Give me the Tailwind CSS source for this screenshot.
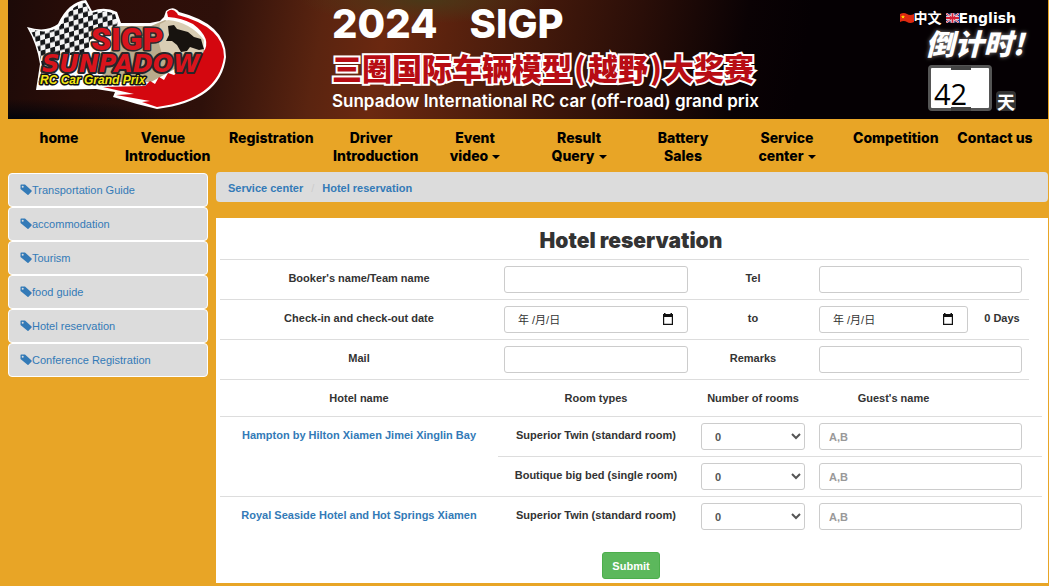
<!DOCTYPE html>
<html lang="en">
<head>
<meta charset="utf-8">
<meta name="viewport" content="width=device-width, initial-scale=1">
<title>Hotel reservation</title>
<script src="https://cdn.jsdelivr.net/npm/@tailwindcss/browser@4"></script>
</head>
<body class="min-h-screen bg-[#e8a526] pl-2 pr-px font-['Liberation_Sans','Noto_Sans_CJK_SC',sans-serif] text-[11px] leading-4 text-[#333]">
<svg class="hidden" aria-hidden="true">
  <symbol id="tag" viewBox="0 0 12 12"><path fill="currentColor" fill-rule="evenodd" d="M.5 1.3Q.5.5 1.3.5H5L11.6 6.4Q12 6.900 11.6 7.4L8.500 10.800Q8 11.200 7.500 10.800L.5 5.100ZM2.700 1.700A1 1 0 1 0 2.700 3.700A1 1 0 1 0 2.700 1.700Z"/></symbol>
  <symbol id="calendar" viewBox="0 0 12 13"><path fill="#111" fill-rule="evenodd" d="M2 0H3.500V1H8.500V0H10V1H11V12H1V1H2ZM2.200 4V10.800H9.800V4Z"/></symbol>
</svg>

<header class="flex h-[119px] items-start justify-between overflow-hidden bg-[#050003] bg-[radial-gradient(ellipse_at_40%_0%,#4a3818_0%,transparent_14%),radial-gradient(ellipse_at_0%_100%,#02040a_0%,transparent_12%),linear-gradient(100deg,#1c0a08_0%,#2c0d08_8%,#2e100a_20%,#5a2410_30%,#6b2810_36%,#4a1c0c_48%,#2a0e08_60%,#0a0204_70%,#050003_76%)] pr-6">
  <div class="flex">
    <svg class="ml-[17px] h-[112px] w-[204px] shrink-0" viewBox="25 0 204 112" role="img" aria-label="SIGP Sunpadow RC Car Grand Prix">
      <defs><pattern id="chk" width="10" height="10" patternUnits="userSpaceOnUse" patternTransform="rotate(-16) skewX(-14)"><rect width="10" height="10" fill="#f4f4f4"/><path d="M0 0h5v10h5V5H0Z" fill="#15171a"/></pattern></defs>
      <path d="M27 27Q46 33 58 24Q68 2 86 0L92 11Q105 6 117 12L121 23H150L160 21L164 17L166 11Q173 5 179 12Q226 24 226 57Q221 101 157 109L137 104L113 97L115 92L96 89L36 90L40 64Q37 44 27 27Z" fill="#fff"/>
      <path d="M30 29Q48 35 60 26Q70 5 85 3L91 13Q104 9 115 14L118 25L90 40L88 55H48L38 85L42 66Q39 46 30 29Z" fill="url(#chk)"/>
      <path d="M119 26H151L165 20L190 30L206 52L151 82H100Z" fill="#b9ab8c"/>
      <path d="M160 24L168 20Q190 22 204 40L203 54H162L158 40Z" fill="#d9cdb4"/>
      <path d="M168 26L174 25L177 29L188 32L194 37L201 39L203 46L204 49L199 50L190 47L187 51L181 52L177 45L172 41H166L169 35Z" fill="#17130f"/>
      <path d="M167 12Q172 7 177 13L178 15Q224 27 224 57Q218 99 157 107L142 102L150 101L116 95L134 94L103 87L145 86L150 81L155 84L159 77L164 80L168 73L174 75L203 53Q213 39 193 24Q182 18 168 17Z" fill="#d4070f"/>
      <g stroke-linejoin="round" paint-order="stroke fill">
        <text x="91" y="50" font-family="Roboto, sans-serif" font-weight="900" font-size="32" fill="#d9141c" stroke="#2a2a2c" stroke-width="3">SIGP</text>
        <text x="42" y="72" font-family="DejaVu Sans, sans-serif" font-weight="700" font-style="italic" font-size="24" fill="#d9141c" stroke="#26262a" stroke-width="4">SUNPADOW</text>
        <text x="40" y="84" font-family="Liberation Sans, sans-serif" font-weight="700" font-style="italic" font-size="12" fill="#f3e713" stroke="#111" stroke-width="3">RC Car Grand Prix</text>
      </g>
    </svg>
    <div class="ml-[103px] mt-1 text-white">
      <div class="flex gap-8 font-[Inter] text-[40px] font-extrabold leading-10"><span>2024</span><span>SIGP</span></div>
      <h1 class="mt-[3px] whitespace-nowrap font-['Noto_Sans_CJK_SC'] text-[30px] font-black leading-10 text-[#b80d14] [paint-order:stroke_fill] [-webkit-text-stroke:4px_#fff]">三圈国际车辆模型<span class="mx-0.5">(</span>越野<span class="mx-0.5">)</span>大奖赛</h1>
      <p class="mt-1 whitespace-nowrap font-[Inter] text-[17px] leading-5 font-semibold">Sunpadow International RC car (off-road) grand prix</p>
    </div>
  </div>
  <div class="mr-2 mt-2 flex flex-col items-end text-white">
    <div class="flex items-center font-['DejaVu_Sans','Noto_Sans_CJK_SC'] text-sm font-bold leading-5">
      <svg class="h-[10px] w-[14px]" viewBox="0 0 14 10"><path fill="#de2910" d="M0 1Q4-1 7 1T14 1V9Q10 11 7 9T0 9Z"/><path fill="#ffde00" d="M3 2l.6 1.300h1.400l-1.100.9.400 1.400L3 4.800l-1.300.8.4-1.400L1 3.300h1.400Z"/></svg>
      <a href="#" class="mr-1">中文</a>
      <svg class="h-[10px] w-[13px]" viewBox="0 0 14 10"><path fill="#29337a" d="M0 0H14V10H0Z"/><path stroke="#fff" stroke-width="2" d="M0 0 14 10M14 0 0 10"/><path stroke="#fff" stroke-width="4" d="M7 0V10M0 5H14"/><path stroke="#d41f35" d="M0 0 14 10M14 0 0 10"/><path stroke="#d41f35" stroke-width="2" d="M7 0V10M0 5H14"/></svg>
      <a href="#">English</a>
    </div>
    <div class="-mr-2 -mt-1 font-['Noto_Sans_CJK_SC'] text-[29px] font-black italic leading-9 [text-shadow:0_0_4px_#888]">倒计时!</div>
    <div class="mt-[5px] flex items-end gap-1">
      <div class="relative flex h-[46px] w-16 items-end rounded-sm border-[3px] border-[#555] bg-white pl-[3px] pt-3 font-['Open_Sans'] text-[29px] leading-7 font-medium text-black before:absolute before:left-5 before:-top-[2px] before:h-1 before:w-5 before:bg-[#444] after:absolute after:left-5 after:-bottom-[3px] after:h-1 after:w-5 after:bg-[#444]">42</div>
      <div class="rounded-sm bg-[#333] px-px font-['Noto_Sans_CJK_SC'] text-lg font-bold leading-5">天</div>
    </div>
  </div>
</header>

<nav class="grid h-[53px] grid-cols-10 pt-[10px] text-center font-[Inter] text-sm font-extrabold leading-[18px] text-black">
  <a href="#" class="pl-3 pr-[14px]">home</a>
  <a href="#" class="pl-[13px] pr-[15px]">Venue Introduction</a>
  <a href="#" class="pl-[13px] pr-[15px]">Registration</a>
  <a href="#" class="pl-[13px] pr-[15px]">Driver Introduction</a>
  <a href="#" class="pl-3 pr-[14px]">Event video <span class="ml-px inline-block border-x-4 border-t-4 border-x-transparent border-t-black align-middle"></span></a>
  <a href="#" class="pl-3 pr-[14px]">Result Query <span class="ml-px inline-block border-x-4 border-t-4 border-x-transparent border-t-black align-middle"></span></a>
  <a href="#" class="pl-3 pr-[14px]">Battery Sales</a>
  <a href="#" class="pl-3 pr-[14px]">Service center <span class="ml-px inline-block border-x-4 border-t-4 border-x-transparent border-t-black align-middle"></span></a>
  <a href="#" class="pl-[13px] pr-[15px]">Competition</a>
  <a href="#" class="whitespace-nowrap pl-3 pr-[14px]">Contact us</a>
</nav>

<div class="flex items-start gap-2">
  <aside class="mt-px w-[200px] shrink-0 text-[#337ab7]">
    <a href="#" class="flex h-[34px] items-center rounded border border-white bg-[#dcdcdc] pl-[11px]"><svg class="size-3"><use href="#tag"/></svg>Transportation Guide</a>
    <a href="#" class="flex h-[34px] items-center rounded border border-white bg-[#dcdcdc] pl-[11px]"><svg class="size-3"><use href="#tag"/></svg>accommodation</a>
    <a href="#" class="flex h-[34px] items-center rounded border border-white bg-[#dcdcdc] pl-[11px]"><svg class="size-3"><use href="#tag"/></svg>Tourism</a>
    <a href="#" class="flex h-[34px] items-center rounded border border-white bg-[#dcdcdc] pl-[11px]"><svg class="size-3"><use href="#tag"/></svg>food guide</a>
    <a href="#" class="flex h-[34px] items-center rounded border border-white bg-[#dcdcdc] pl-[11px]"><svg class="size-3"><use href="#tag"/></svg>Hotel reservation</a>
    <a href="#" class="flex h-[34px] items-center rounded border border-white bg-[#dcdcdc] pl-[11px]"><svg class="size-3"><use href="#tag"/></svg>Conference Registration</a>
  </aside>

  <main class="min-w-0 grow">
    <div class="flex h-[30px] items-center rounded bg-[#dcdcdc] pl-3 pt-px font-bold text-[#337ab7]">
      <a href="#">Service center</a><span class="px-2 font-normal text-[#ccc]">/</span><a href="#">Hotel reservation</a>
    </div>
    <form class="mt-4 bg-white pl-1 pr-1.5 pb-1 font-bold">
      <h2 class="pt-[13px] pb-2 text-center font-[Inter] text-[21px] leading-5 font-black">Hotel reservation</h2>
      <table class="w-full table-fixed text-center">
        <colgroup><col class="w-[278px]"><col class="w-[196px]"><col class="w-[118px]"><col class="w-[163px]"><col class="w-[54px]"><col class="w-[13px]"></colgroup>
        <tbody>
          <tr>
            <td class="border-t border-[#ddd] py-[10px] align-top"><label for="booker">Booker's name/Team name</label></td>
            <td class="border-t border-[#ddd] px-[6px] py-[6px]"><input id="booker" class="block h-[27px] w-full rounded-[3px] border border-[#ccc] px-[9px]"></td>
            <td class="border-t border-[#ddd] py-[10px] align-top"><label for="tel">Tel</label></td>
            <td colspan="2" class="border-t border-[#ddd] px-[7px] py-[6px]"><input id="tel" type="tel" class="block h-[27px] w-full rounded-[3px] border border-[#ccc] px-[9px]"></td>
          </tr>
          <tr>
            <td class="border-t border-[#ddd] py-[10px] align-top"><label for="checkin">Check-in and check-out date</label></td>
            <td class="border-t border-[#ddd] px-[6px] py-[6px]"><div class="flex h-[27px] items-center rounded-[3px] border border-[#ccc] px-[13px]"><input id="checkin" value="年 /月/日" class="min-w-0 grow font-normal text-[#333]"><button type="button" aria-label="Choose check-in date"><svg class="h-[13px] w-3"><use href="#calendar"/></svg></button></div></td>
            <td class="border-t border-[#ddd] py-[10px] align-top"><label for="checkout">to</label></td>
            <td class="border-t border-[#ddd] px-[7px] py-[6px]"><div class="flex h-[27px] items-center rounded-[3px] border border-[#ccc] px-[13px]"><input id="checkout" value="年 /月/日" class="min-w-0 grow font-normal text-[#333]"><button type="button" aria-label="Choose check-out date"><svg class="h-[13px] w-3"><use href="#calendar"/></svg></button></div></td>
            <td class="border-t border-[#ddd] py-[10px] align-top whitespace-nowrap">0 Days</td>
          </tr>
          <tr>
            <td class="border-t border-[#ddd] py-[10px] align-top"><label for="mail">Mail</label></td>
            <td class="border-t border-[#ddd] px-[6px] py-[6px]"><input id="mail" type="email" class="block h-[27px] w-full rounded-[3px] border border-[#ccc] px-[9px]"></td>
            <td class="border-t border-[#ddd] py-[10px] align-top"><label for="remarks">Remarks</label></td>
            <td colspan="2" class="border-t border-[#ddd] px-[7px] py-[6px]"><input id="remarks" class="block h-[27px] w-full rounded-[3px] border border-[#ccc] px-[9px]"></td>
          </tr>
          <tr>
            <th class="border-t border-[#ddd] py-[10px]">Hotel name</th>
            <th class="border-t border-[#ddd] py-[10px]">Room types</th>
            <th class="border-t border-[#ddd] py-[10px]">Number of rooms</th>
            <th class="border-t border-[#ddd] py-[10px]">Guest's name</th>
            <td class="border-t border-[#ddd]"></td>
          </tr>
          <tr>
            <td rowspan="2" class="border-t border-[#ddd] py-[10px] align-top text-[#337ab7]"><a href="#">Hampton by Hilton Xiamen Jimei Xinglin Bay</a></td>
            <td class="border-t border-[#ddd] py-[10px] align-top">Superior Twin (standard room)</td>
            <td class="border-t border-[#ddd] px-[7px] py-[6px]"><select aria-label="Number of Superior Twin rooms, Hampton" class="block h-[27px] w-full rounded-[3px] border border-[#ccc] bg-white px-[9px] text-[#555]"><option>0</option><option>1</option><option>2</option></select></td>
            <td colspan="2" class="border-t border-[#ddd] px-[7px] py-[6px]"><input aria-label="Guest's name" placeholder="A,B" class="block h-[27px] w-full rounded-[3px] border border-[#ccc] px-[9px] placeholder:text-[#999]"></td>
            <td class="border-t border-[#ddd]"></td>
          </tr>
          <tr>
            <td class="border-t border-[#ddd] py-[10px] align-top">Boutique big bed (single room)</td>
            <td class="border-t border-[#ddd] px-[7px] py-[6px]"><select aria-label="Number of Boutique big bed rooms, Hampton" class="block h-[27px] w-full rounded-[3px] border border-[#ccc] bg-white px-[9px] text-[#555]"><option>0</option><option>1</option><option>2</option></select></td>
            <td colspan="2" class="border-t border-[#ddd] px-[7px] py-[6px]"><input aria-label="Guest's name" placeholder="A,B" class="block h-[27px] w-full rounded-[3px] border border-[#ccc] px-[9px] placeholder:text-[#999]"></td>
            <td class="border-t border-[#ddd]"></td>
          </tr>
          <tr>
            <td class="border-t border-[#ddd] py-[10px] align-top text-[#337ab7]"><a href="#">Royal Seaside Hotel and Hot Springs Xiamen</a></td>
            <td class="border-t border-[#ddd] py-[10px] align-top">Superior Twin (standard room)</td>
            <td class="border-t border-[#ddd] px-[7px] py-[6px]"><select aria-label="Number of Superior Twin rooms, Royal Seaside" class="block h-[27px] w-full rounded-[3px] border border-[#ccc] bg-white px-[9px] text-[#555]"><option>0</option><option>1</option><option>2</option></select></td>
            <td colspan="2" class="border-t border-[#ddd] px-[7px] py-[6px]"><input aria-label="Guest's name" placeholder="A,B" class="block h-[27px] w-full rounded-[3px] border border-[#ccc] px-[9px] placeholder:text-[#999]"></td>
            <td class="border-t border-[#ddd]"></td>
          </tr>
        </tbody>
      </table>
      <button type="submit" class="mx-auto mt-4 block h-[27px] rounded-[3px] border border-[#4cae4c] bg-[#5cb85c] px-[9px] text-white">Submit</button>
    </form>
  </main>
</div>
</body>
</html>
